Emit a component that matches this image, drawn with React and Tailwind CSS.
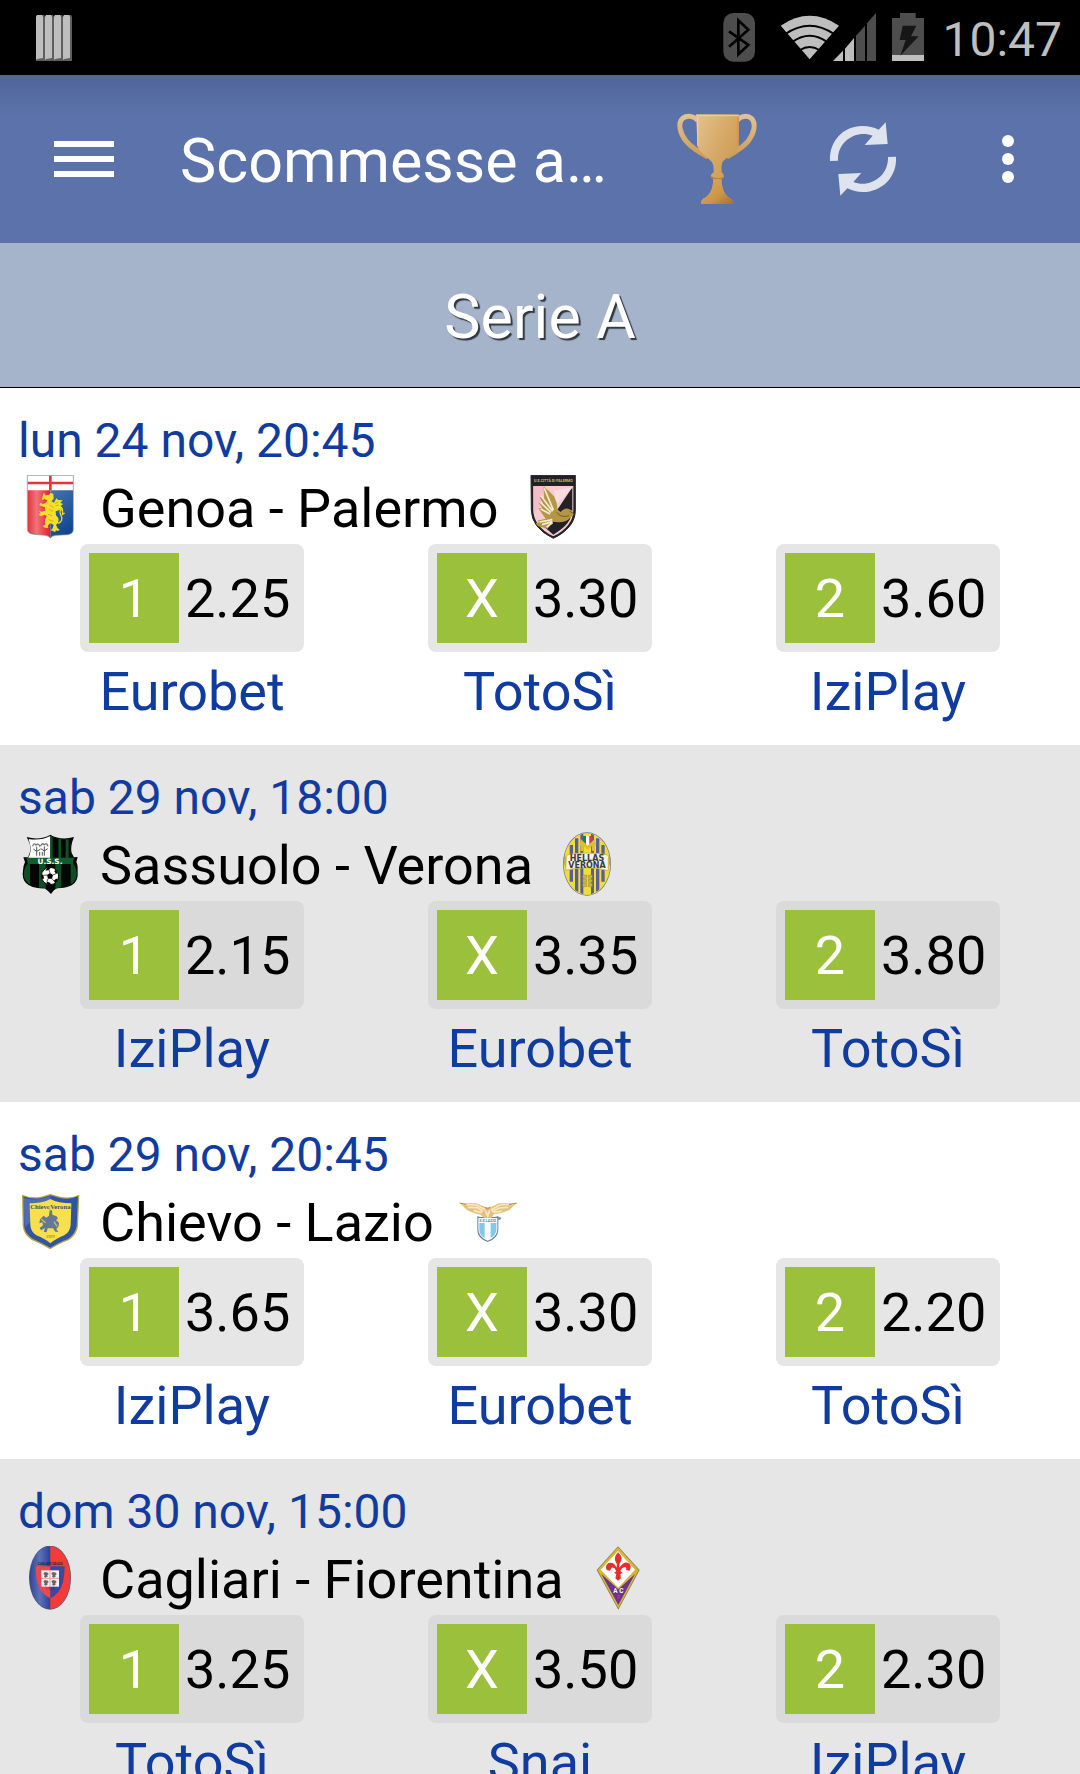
import React from "react";

function NotificationIcon() {
  return (
    <svg className="h-12 w-9" viewBox="0 0 36 48" aria-hidden="true">
      {[0, 9, 18, 27].map((x) => (
        <g key={x}>
          <path d={`M${x} 3l1-2h7l1 2v44H${x}z`} fill="#5f5f5f" />
          <path d={`M${x} 3l1-2h5l1 2v41l-6 1l-1 1z`} fill="#bebebe" />
        </g>
      ))}
    </svg>
  );
}

function BluetoothIcon() {
  return (
    <svg className="h-[49px] w-8" viewBox="248 36 96 147" role="img" aria-label="Bluetooth">
      <rect x="249" y="36" width="95" height="146" rx="30" fill="#4d4d4d" />
      <path
        d="M266 91L324 132L294 160V58L324 86L266 137"
        fill="none"
        stroke="#000"
        strokeWidth="8"
      />
    </svg>
  );
}

function NetworkIcon() {
  return (
    <svg className="h-[49px] w-24" viewBox="420 36 288 147" role="img" aria-label="Wi-Fi e rete">
      <path d="M422 74Q509 15 597 74L509 175Z" fill="#bebebe" />
      <g fill="none" stroke="#000" strokeWidth="6">
        <path d="M436 99Q509 49 582 99" />
        <path d="M458 122Q509 87 560 122" />
        <path d="M480 147Q509 129 538 147" />
      </g>
      <path d="M579 180L609 149V180ZM615 143L642 111V180H615Z" fill="#bebebe" />
      <path d="M648 104L675 74V180H648ZM681 67L708 36V180H681Z" fill="#4d4d4d" />
    </svg>
  );
}

function BatteryIcon() {
  return (
    <svg className="h-[49px] w-8" viewBox="756 36 96 147" role="img" aria-label="Batteria">
      <path d="M780 36H827V51H852V162H756V51H780Z" fill="#4d4d4d" />
      <path d="M756 162H852V180H756Z" fill="#bebebe" />
      <path d="M788 74H829L813 106H836L781 164L797 117H779Z" fill="#161616" />
    </svg>
  );
}

function TrophyIcon() {
  return (
    <svg className="size-24" viewBox="96 333 288 288" aria-hidden="true">
      <defs>
        <linearGradient id="gold" x1="0" y1="0" x2="1" y2="1">
          <stop offset="0" stopColor="#e3c290" />
          <stop offset="0.5" stopColor="#d4a662" />
          <stop offset="1" stopColor="#c4933f" />
        </linearGradient>
        <linearGradient id="handle" x1="0" y1="0" x2="0" y2="1">
          <stop offset="0" stopColor="#e2c193" />
          <stop offset="1" stopColor="#cf9c50" />
        </linearGradient>
        <linearGradient id="foot" x1="0" y1="0" x2="1" y2="1">
          <stop offset="0" stopColor="#d9a964" />
          <stop offset="0.6" stopColor="#cc9648" />
          <stop offset="1" stopColor="#a86a3c" />
        </linearGradient>
      </defs>
      <g fill="none" stroke="url(#handle)" strokeWidth="15">
        <path d="M174 362C160 345 139 347 128 355C112 369 120 401 139 424C154 442 176 456 204 471" />
        <path d="M290 362C304 345 325 347 334 355C349 370 343 400 324 424C309 442 286 456 260 471" />
      </g>
      <path
        d="M168 343H297V440C285 460 262 470 249 484Q243 492 245 517Q252 521 252 530Q248 536 244 537C246 570 254 587 273 596Q281 601 280 612H183Q182 601 190 596C209 587 219 570 220 537Q212 534 212 528Q214 520 221 517Q222 494 215 485C203 471 181 460 173 440Z"
        fill="url(#gold)"
      />
      <path
        d="M220 537H244C246 570 254 587 273 596Q281 601 280 612H183Q182 601 190 596C209 587 219 570 220 537Z"
        fill="url(#foot)"
      />
      <path d="M212 528Q232 540 252 530Q248 536 244 537H220Q213 535 212 528Z" fill="#b97f35" />
      <path d="M170 347H296M173 350V438" stroke="#efd6ac" strokeWidth="4" opacity="0.7" fill="none" />
      <path d="M294 350V438" stroke="#b98a49" strokeWidth="3" opacity="0.7" />
    </svg>
  );
}

function RefreshIcon() {
  return (
    <svg className="size-24" viewBox="528 333 288 288" fill="#dfe3ee" aria-hidden="true">
      <path d="M570 483C567 420 614 377 668 378Q694 378 716 389L737 367L743 432L674 435L698 407C650 389 592 422 594 482Z" />
      <path d="M768 470C772 532 724 576 669 576Q643 576 622 565L601 587L595 522L664 519L640 546C687 565 746 531 744 471Z" />
    </svg>
  );
}

function MoreIcon() {
  return (
    <svg className="size-24" viewBox="960 333 288 288" fill="#fff" aria-hidden="true">
      <circle cx="1104" cy="423" r="18" />
      <circle cx="1104" cy="477" r="18" />
      <circle cx="1104" cy="531" r="18" />
    </svg>
  );
}

function GenoaCrest() {
  const shape = "M52 46H190V208Q190 222 172 224L137 226Q126 227 121 234Q116 227 106 226L72 223Q52 221 52 206Z";
  return (
    <svg className="size-16" viewBox="24 45 192 192" role="img" aria-label="Genoa">
      <defs>
        <clipPath id="genoa"><path d={shape} /></clipPath>
        <linearGradient id="genoaRed">
          <stop offset="0" stopColor="#e2303a" />
          <stop offset="0.4" stopColor="#f0747a" />
          <stop offset="1" stopColor="#e41d2a" />
        </linearGradient>
        <linearGradient id="genoaBlue" x1="0" y1="0" x2="0.4" y2="1">
          <stop offset="0" stopColor="#4674ac" />
          <stop offset="1" stopColor="#12478f" />
        </linearGradient>
      </defs>
      <g clipPath="url(#genoa)">
        <path d="M52 46h138v45H52z" fill="#fff" />
        <path d="M52 91h69v145H52z" fill="url(#genoaRed)" />
        <path d="M121 91h69v145h-69z" fill="url(#genoaBlue)" />
        <path d="M52 69H190M121 46V91" stroke="#e8323c" strokeWidth="8" />
      </g>
      <path
        d="M97 113L101 98L107 106Q118 107 122 99L130 101L131 116L124 124L132 128L139 115L145 120L158 121L151 128L159 132L152 138L158 144L148 150L137 154L138 166L145 174Q148 190 138 195L143 205L149 209L144 213L138 211L135 217L129 213L122 211L128 205L131 195L121 189L113 197L115 204L105 203L98 198L106 194L105 181L110 168L104 164L94 169L86 164L92 159L87 153L95 155L106 152L105 142L97 139L88 136L91 128L99 132L107 129L112 121L104 117L95 121Z"
        fill="#f6de2c"
      />
      <path d="M144 190Q161 183 153 166Q145 151 157 147L158 163L164 159" fill="none" stroke="#ecd83d" strokeWidth="4" />
      <path d="M119 135l12 8m-14 5l12 6m-15 9l12 4m-10 12l14 5m5-54l10-3m-8 10l10-2" stroke="#b49b2b" strokeWidth="2" />
      <path d={shape} fill="none" stroke="#777f93" strokeWidth="2" />
    </svg>
  );
}

function PalermoCrest() {
  const shape = "M54 46H187V150Q187 177 171 197Q153 220 121 235Q88 219 71 197Q55 176 55 150Z";
  return (
    <svg className="size-16" viewBox="24 45 192 192" role="img" aria-label="Palermo">
      <path d={shape} fill="#222126" />
      <path d="M61 78H181V150Q181 175 166 194Q149 216 121 229Q93 216 76 194Q61 174 61 150Z" fill="#f3cdd3" />
      <path d="M178 82V151Q176 174 163 190Q151 206 121 224L97 203Z" fill="#242126" />
      <path d="M123 92L179 82L127 137Z" fill="#f8dce0" />
      <path d="M61 78H98L78 144L62 160Z" fill="#f5bcc9" />
      <path d="M92 80Q111 93 124 110Q134 130 133 148L143 156Q153 143 166 146L178 152L182 164L171 174Q158 188 135 187L119 185L104 206L76 199L65 190L79 187L73 182L98 176L76 145L88 145L77 128L91 131L79 111L93 116Z" fill="#b39745" />
      <g fill="none" stroke="#f5ecd5" strokeWidth="5">
        <path d="M94 85L121 150M84 107L119 154M83 128L114 157M83 147L111 162M80 186L118 179M87 194L118 185M101 201L119 188" />
      </g>
      <path d="M170 154l10 6m-49-3q12 18 38 10" stroke="#745d28" strokeWidth="3" fill="none" />
      <text x="121" y="67" textAnchor="middle" fill="#d8ba5a" fontFamily="Roboto, sans-serif" fontWeight="700" fontSize="11">
        U.S.CITTÀ DI PALERMO
      </text>
      <path d={shape} fill="none" stroke="#25242a" strokeWidth="3" />
    </svg>
  );
}

function Ball({ cx, cy, r }) {
  return (
    <g transform={`translate(${cx} ${cy}) scale(${r / 26})`}>
      <circle r="26" fill="#fff" stroke="#000" strokeWidth="3" />
      <path d="M0-9L9-3L6 8H-6L-9-3ZM-8-25L2-25L-3-18L-14-16ZM17-19L24-8L18-7L13-14ZM18 8L24 9L16 20L11 15ZM-9 17L1 20L2 25L-11 23ZM-25-5L-20-3L-18 7L-23 11Z" fill="#000" />
      <path d="M0-9L-3-18M9-3L18-7M6 8L12 15M-6 8L-9 17M-9-3L-19-2" stroke="#000" strokeWidth="2" />
    </g>
  );
}

function SassuoloCrest() {
  return (
    <svg className="size-16" viewBox="24 36 192 192" role="img" aria-label="Sassuolo">
      <defs>
        <clipPath id="sassTop">
          <path d="M56 57Q92 63 121 48Q151 62 187 57Q178 76 180 90L188 115H54Q66 91 61 77Z" />
        </clipPath>
        <clipPath id="sassBottom">
          <path d="M55 128H188Q207 156 196 179Q182 201 145 203L126 213L116 213L101 203Q61 204 46 180Q33 157 55 128Z" />
        </clipPath>
      </defs>
      <path d="M50 51Q90 62 121 44Q152 62 192 51Q180 80 185 99L192 112L203 111L199 126Q204 135 203 153Q206 184 185 196Q167 206 135 205L130 213L123 222L114 213L108 205Q64 207 48 189Q35 176 39 151Q40 136 45 126L40 112L54 112L61 93Q65 79 50 51Z" fill="#050705" />
      <g clipPath="url(#sassTop)">
        <path d="M50 45h71v72H50z" fill="#f9faf9" />
        <path d="M121 45h70v72h-70z" fill="#0b5123" />
        <path d="M128 45h17v72h-17zM153 45h14v72h-14zM176 45h15v72h-15z" fill="#040604" />
      </g>
      <path d="M80 107V94L70 87M80 94L91 88M103 107V93L92 86M103 93L113 86M89 107V96M97 107V96M80 94V80M103 93V79" fill="none" stroke="#555" strokeWidth="3" />
      <path d="M68 79q3-12 10-4q8-7 12 5M92 78q5-11 10-4q9-7 12 5" fill="none" stroke="#777" strokeWidth="4" />
      <g clipPath="url(#sassBottom)">
        <path d="M35 128h175v90H35z" fill="#0d4f25" />
        <path d="M60 128h27v90H60zM107 128h29v90h-29zM154 128h28v90h-28z" fill="#030604" />
      </g>
      <path d="M49 113H192L188 132H54Z" fill="#125b2d" />
      <text x="120" y="131" textAnchor="middle" fill="#fff" fontFamily="DejaVu Sans, sans-serif" fontWeight="700" fontSize="22">
        U.S.S.
      </text>
      <Ball cx={120} cy={168} r={26} />
    </svg>
  );
}

function VeronaCrest() {
  return (
    <svg className="size-16" viewBox="22 36 192 192" role="img" aria-label="Hellas Verona">
      <defs>
        <clipPath id="verona"><ellipse cx="118" cy="132" rx="67" ry="92" /></clipPath>
      </defs>
      <ellipse cx="118" cy="132" rx="72" ry="95" fill="#697092" />
      <ellipse cx="118" cy="132" rx="70" ry="93" fill="#f0dd3a" />
      <g clipPath="url(#verona)">
        <path d="M66 75h10v110H66zM82 55h10v160H82zM98 42h9v182h-9zM130 42h9v182h-9zM145 55h10v160h-10zM161 75h10v110h-10z" fill="#5a5f9a" />
      </g>
      <path d="M52 110Q50 132 57 151M184 110Q187 132 179 151" stroke="#474c91" strokeWidth="2" fill="none" />
      <path d="M106 48H115V72L106 66Z" fill="#15834c" />
      <path d="M115 47H125V73L120 78L115 73Z" fill="#fff" />
      <path d="M125 48H134V65L125 72Z" fill="#d53d3c" />
      <path d="M103 93V67L120 84L137 67V93M96 72L108 69M133 69L145 72" stroke="#dcc02e" strokeWidth="9" fill="none" />
      <path d="M105 165h12v10h-12zM122 165h12v10h-12zM105 178h12v9h-12zM122 178h12v9h-12zM105 190h12v10h-12z M122 190h12v10h-12z" fill="#cbb542" stroke="#77703b" />
      <path d="M56 105Q118 93 182 105L182 152Q118 134 54 151Z" fill="#f2f2ee" stroke="#d2b94d" strokeWidth="3" />
      <g textAnchor="middle" fontFamily="DejaVu Sans, sans-serif" fontWeight="700" fill="#3b3c40">
        <text x="118" y="124" fontSize="24">HELLAS</text>
        <text x="118" y="144" fontSize="24">VERONA</text>
      </g>
    </svg>
  );
}

function ChievoCrest() {
  return (
    <svg className="size-16" viewBox="24 27 192 192" role="img" aria-label="Chievo">
      <path d="M36 44Q65 56 93 50L121 42L151 50Q181 57 208 44L204 138Q201 164 177 180Q143 193 121 208Q97 193 65 180Q40 163 38 137Z" fill="#b9a83e" />
      <path d="M40 49Q67 59 94 54L121 46L150 54Q178 60 204 49L200 137Q197 160 175 176Q142 189 121 203Q98 189 68 176Q44 160 42 137Z" fill="#3254a4" />
      <path d="M59 70Q97 70 121 57Q146 70 184 70L182 135Q180 156 163 166Q137 176 121 190Q105 176 79 166Q62 155 61 135Z" fill="#f8e04c" />
      <text x="121" y="88" textAnchor="middle" fill="#40506c" fontFamily="Liberation Serif, serif" fontWeight="700" fontSize="20">
        ChievoVerona
      </text>
      <path d="M119 91L126 91L127 104L140 109L144 116L138 120L147 128L146 139L139 147L145 156L136 155L129 145L113 145L110 157L101 155L105 144L93 151L89 144L99 136L97 127L88 130L90 118L101 107L109 113L117 107Z" fill="#64779a" />
      <path d="M119 91V77M93 117L107 128M132 125L141 139" stroke="#c5bf67" strokeWidth="4" />
      <text x="121" y="175" textAnchor="middle" fill="#665f39" fontFamily="Liberation Serif, serif" fontSize="13">1929</text>
      <path d="M40 53Q68 62 94 56L121 48L121 57Q98 70 60 70L61 126L44 142Z" fill="#fff" opacity="0.15" />
    </svg>
  );
}

function LazioCrest() {
  return (
    <svg className="size-16" viewBox="31 27 192 192" role="img" aria-label="Lazio">
      <path d="M95 108Q104 114 125 108Q145 114 158 108V150Q157 176 126 186Q95 176 95 151Z" fill="#6e8298" />
      <path d="M98 114H155V149Q154 171 126 182Q99 171 98 150Z" fill="#f8fcff" />
      <path d="M101 129H117V174Q102 166 101 151ZM135 129H152V150Q151 165 135 174Z" fill="#80c9eb" />
      <text x="126" y="126" textAnchor="middle" fill="#66849c" fontFamily="Roboto, sans-serif" fontWeight="700" fontSize="11">S.S.LAZIO</text>
      <path d="M42 69L92 70L121 82L134 82L160 70L213 69L191 90L165 100L145 102L137 114L116 114L105 104L84 99L65 91Z" fill="#e1c17d" />
      <path d="M51 73L93 75L118 89M67 82L95 83L112 94M84 92L109 98M204 73L162 75L136 90M188 82L161 84L138 95M169 93L143 97M119 92L126 108L132 91" stroke="#fae7bf" strokeWidth="5" fill="none" />
      <path d="M42 69L62 74M213 69L190 74M118 82L126 87L134 81" stroke="#b18d49" strokeWidth="3" fill="none" />
      <circle cx="161" cy="115" r="5" fill="#729eaa" />
    </svg>
  );
}

function CagliariCrest() {
  return (
    <svg className="size-16" viewBox="24 33 192 192" role="img" aria-label="Cagliari">
      <defs>
        <clipPath id="cagliari"><ellipse cx="120" cy="128" rx="61" ry="94" /></clipPath>
        <linearGradient id="cagliariBlue">
          <stop offset="0" stopColor="#2d419a" />
          <stop offset="0.5" stopColor="#5973b8" />
          <stop offset="1" stopColor="#2d3f9b" />
        </linearGradient>
      </defs>
      <ellipse cx="120" cy="128" rx="63" ry="96" fill="#565875" />
      <g clipPath="url(#cagliari)">
        <path d="M57 32h64v193H57z" fill="url(#cagliariBlue)" />
        <path d="M121 32h64v193h-64z" fill="#f53b37" />
      </g>
      <path d="M77 94H121V190Q91 177 83 145Q77 127 77 94Z" fill="#ed4650" />
      <path d="M121 94H164Q164 126 156 149Q148 176 121 190Z" fill="#3a48a2" />
      <text x="121" y="90" textAnchor="middle" fill="#272237" fontFamily="Roboto, sans-serif" fontWeight="700" fontSize="9">CAGLIARI CALCIO</text>
      <path d="M94 106H147V155H94Z" fill="#f4f2ef" />
      <path d="M120 106V155M94 130H147" stroke="#ed9ba0" strokeWidth="3" />
      {[[108, 119], [132, 119], [108, 143], [132, 143]].map(([x, y]) => (
        <path key={`${x}-${y}`} d={`M${x - 8} ${y - 4}l5-4l9 2l2 5l-4 2l1 5l-7 3l-4-3l2-3z`} fill="#68656a" />
      ))}
      <text x="121" y="164" textAnchor="middle" fill="#322d50" fontFamily="Roboto, sans-serif" fontSize="9">1 9 2 0</text>
    </svg>
  );
}

function FiorentinaCrest() {
  return (
    <svg className="size-16" viewBox="22 33 192 192" role="img" aria-label="Fiorentina">
      <path d="M118 34L183 105L119 224L54 105Z" fill="#8c7c54" />
      <path d="M118 37L180 105L119 220L57 105Z" fill="#d8b632" />
      <path d="M118 48L169 104L119 158L66 104Z" fill="#fff" />
      <path d="M68 117L119 163L169 117L119 210Z" fill="#6a348f" />
      <path d="M118 52Q132 66 128 76Q120 88 122 98Q136 78 149 84Q161 91 153 107L142 105Q145 96 138 96Q129 98 125 108L132 114L125 117L127 130L118 137L110 130L113 117L106 114L113 108Q107 96 99 98L94 107L84 105Q78 90 90 84Q105 79 114 98Q117 87 109 76Q107 63 118 52Z" fill="#e52e2d" />
      <g textAnchor="middle" fontFamily="Roboto, sans-serif" fontWeight="700">
        <text x="119" y="175" fill="#fff" fontSize="19">A C</text>
        <text x="119" y="192" fill="#e52e3d" fontSize="17">F</text>
      </g>
    </svg>
  );
}

const matches = [
  {
    date: "lun 24 nov, 20:45",
    name: "Genoa - Palermo",
    Home: GenoaCrest,
    Away: PalermoCrest,
    odds: [["1", "2.25", "Eurobet"], ["X", "3.30", "TotoSì"], ["2", "3.60", "IziPlay"]],
  },
  {
    date: "sab 29 nov, 18:00",
    name: "Sassuolo - Verona",
    Home: SassuoloCrest,
    Away: VeronaCrest,
    odds: [["1", "2.15", "IziPlay"], ["X", "3.35", "Eurobet"], ["2", "3.80", "TotoSì"]],
  },
  {
    date: "sab 29 nov, 20:45",
    name: "Chievo - Lazio",
    Home: ChievoCrest,
    Away: LazioCrest,
    odds: [["1", "3.65", "IziPlay"], ["X", "3.30", "Eurobet"], ["2", "2.20", "TotoSì"]],
  },
  {
    date: "dom 30 nov, 15:00",
    name: "Cagliari - Fiorentina",
    Home: CagliariCrest,
    Away: FiorentinaCrest,
    odds: [["1", "3.25", "TotoSì"], ["X", "3.50", "Snai"], ["2", "2.30", "IziPlay"]],
  },
];

function Match({ match, shaded }) {
  const { date, name, Home, Away, odds } = match;
  return (
    <li className={`px-[18px] pt-[25px] pb-[21px] ${shaded ? "bg-[#e6e6e6]" : "bg-white"}`}>
      <p className="text-[48px] leading-[56px] text-[#103b9f]">{date}</p>
      <div className="mt-1.5 flex h-16 items-center">
        <Home />
        <h2 className="mr-[22px] ml-[18px] pt-1 text-[54px] leading-[64px] whitespace-nowrap">{name}</h2>
        <Away />
      </div>
      <div className="mt-[5px] grid grid-cols-3">
        {odds.map(([sign, value, bookmaker]) => (
          <div key={sign} className="flex flex-col items-center gap-2 text-[54px] leading-[64px]">
            <button
              type="button"
              className={`flex w-56 items-center gap-1.5 rounded-lg p-[9px] ${shaded ? "bg-[#dadada]" : "bg-[#e6e6e6]"}`}
            >
              <span className="flex size-[90px] items-center justify-center bg-[#9bc03c] pt-0.5 text-white">{sign}</span>
              <span className="pt-0.5">{value}</span>
            </button>
            <a href="#" className="text-[#103b9f]">{bookmaker}</a>
          </div>
        ))}
      </div>
    </li>
  );
}

export default function App() {
  return (
    <div className="flex h-screen flex-col overflow-hidden bg-white font-['Roboto',sans-serif] text-black">
      <div className="flex h-[75px] shrink-0 items-center bg-black pr-[18px] pl-9 text-[#bebebe]">
        <NotificationIcon />
        <div className="ml-auto flex items-center">
          <BluetoothIcon />
          <span className="ml-[25px]"><NetworkIcon /></span>
          <span className="ml-4"><BatteryIcon /></span>
          <time className="ml-[18px] pt-1 text-[48px] leading-[56px]">10:47</time>
        </div>
      </div>
      <header className="flex h-[168px] shrink-0 items-center bg-[#5b73aa] bg-linear-to-b from-[#50659a] to-[#5b73aa] to-25% pl-[54px] text-white">
        <button type="button" aria-label="Menu" className="flex w-[60px] flex-col gap-[9px]">
          <span className="h-1.5 w-full bg-white" />
          <span className="h-1.5 w-full bg-white" />
          <span className="h-1.5 w-full bg-white" />
        </button>
        <h1 className="ml-16 min-w-0 flex-1 pt-1 pl-0.5 text-[61px] leading-[72px] whitespace-nowrap">Scommesse a…</h1>
        <button type="button" aria-label="Campionati" className="flex w-36 justify-center"><TrophyIcon /></button>
        <button type="button" aria-label="Aggiorna" className="flex w-36 justify-center"><RefreshIcon /></button>
        <button type="button" aria-label="Altre opzioni" className="flex w-36 justify-center"><MoreIcon /></button>
      </header>
      <div className="flex h-[145px] shrink-0 items-center justify-center border-b border-black bg-[#a5b3cb] pt-1 text-[61px] leading-[72px] text-white text-shadow-[2px_2px_1px_rgb(0_0_0/0.7)]">
        Serie A
      </div>
      <ul className="min-h-0 flex-1">
        {matches.map((match, i) => (
          <Match key={match.name} match={match} shaded={i % 2 === 1} />
        ))}
      </ul>
    </div>
  );
}
